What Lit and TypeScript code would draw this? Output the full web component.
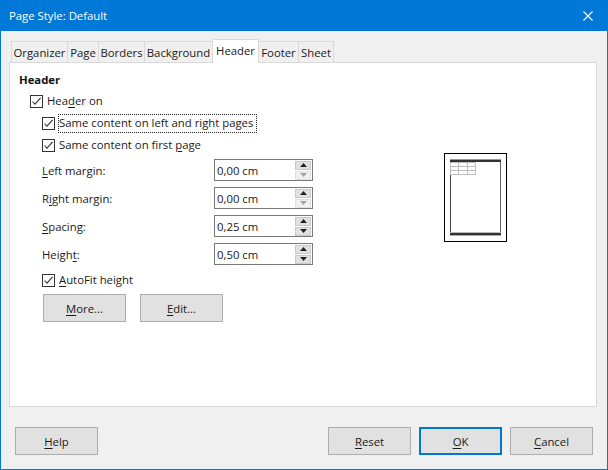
import { LitElement, html, css, svg } from "lit";
import { customElement } from "lit/decorators.js";

const check = html`<svg class="box" width="13" height="13" viewBox="0 0 13 13"><rect x=".5" y=".5" width="12" height="12" fill="#fff" stroke="#333"/><path d="M2.5 6.5 5 9.2 10.6 2.8" fill="none" stroke="#333" stroke-width="1.1"/></svg>`;

const arrow = (up: boolean, dis: boolean) => html`<div class="sb ${dis ? "dis" : ""}"><svg width="7" height="4" viewBox="0 0 7 4"><path d="${up ? "M0 4 3.5 0 7 4Z" : "M0 0 3.5 4 7 0Z"}" fill="${dis ? "#a3a3a3" : "#222"}"/></svg></div>`;

@customElement("app-root")
export class AppRoot extends LitElement {
  static styles = css`
    :host { display: block; width: 608px; height: 470px; font-family: "Open Sans", "Noto Sans", sans-serif; font-size: 11.33px; color: #1a1a1a; }
    * { box-sizing: border-box; }
    u { text-decoration: underline; text-underline-offset: 2px; text-decoration-thickness: 1px; }
    .win { width: 608px; height: 470px; background: #f0f0f0; border: 1px solid #0078d7; border-top: 0; display: flex; flex-direction: column; }
    .title { height: 31px; margin: 0 -1px; background: #0078d7; color: #fff; display: flex; align-items: center; justify-content: space-between; padding: 0 15px 0 9px; flex: none; }
    .title svg { display: block; }
    .body { flex: 1; padding: 8px 10px 0 8px; display: flex; flex-direction: column; }
    .tabs { display: flex; height: 23px; padding-left: 2px; align-items: flex-end; flex: none; position: relative; z-index: 1; }
    .tab { height: 21px; border: 1px solid #d9d9d9; border-bottom: 0; border-left: 0; background: #f0f0f0; display: flex; align-items: center; justify-content: center; }
    .tab:first-child { border-left: 1px solid #d9d9d9; }
    .tab.on { background: #fff; border-left: 0; margin-bottom: -1px; height: 24px; padding-bottom: 2px; }
    .panel { height: 345px; background: #fff; border: 1px solid #d9d9d9; padding: 8px 9px 0 9px; display: flex; flex: none; }
    .left { width: 305px; flex: none; display: flex; flex-direction: column; }
    h4 { margin: 0; font-size: 11.33px; font-weight: 700; height: 17px; line-height: 17px; color: #111; }
    .c { display: flex; align-items: center; gap: 4px; height: 14px; line-height: 14px; white-space: nowrap; }
    .c.l1 { margin: 6px 0 0 11px; }
    .c.l2 { margin: 8px 0 0 23px; }
    .c.auto { margin-top: 8px; }
    .focus { outline: 1px dotted #222; outline-offset: 0; padding: 1px 0 2px; width: 197px; height: 17px; display: block; line-height: 14px; }
    .field { display: flex; align-items: center; height: 22px; margin: 6px 0 0 23px; }
    .field.first { margin-top: 7px; }
    .field label { width: 172px; flex: none; }
    .spin { width: 99px; height: 22px; border: 1px solid #7a7a7a; background: #fff; display: flex; align-items: center; justify-content: space-between; padding: 0 1px 0 2px; }
    .sbs { width: 16px; display: flex; flex-direction: column; gap: 1px; }
    .sb { height: 9px; background: #e1e1e1; border: 1px solid #c9c9c9; display: flex; align-items: center; justify-content: center; }
    .sb.dis { background: #f0f0f0; border-color: #e0e0e0; }
    .sb svg { display: block; }
    .btns { display: flex; gap: 14px; margin: 7px 0 0 24px; }
    .btn { width: 83px; height: 28px; background: #e1e1e1; border: 1px solid #adadad; display: flex; align-items: center; justify-content: center; color: #1a1a1a; }
    .btn.def { border: 2px solid #0078d7; }
    .preview { margin: 82px 0 0 120px; width: 63px; height: 89px; flex: none; }
    .preview svg { display: block; }
    .foot { display: flex; justify-content: space-between; padding: 20px 4px 0 6px; }
    .foot .r { display: flex; gap: 8px; }
  `;

  render() {
    const tabs = [["Organizer", 57], ["Page", 31], ["Borders", 46], ["Background", 68], ["Header", 46], ["Footer", 40], ["Sheet", 35]] as const;
    const fields = [
      [html`<u>L</u>eft margin:`, "0,00 cm", true],
      [html`R<u>i</u>ght margin:`, "0,00 cm", true],
      [html`<u>S</u>pacing:`, "0,25 cm", false],
      [html`Heigh<u>t</u>:`, "0,50 cm", false],
    ] as const;
    return html`
      <div class="win">
        <div class="title">
          <span>Page Style: Default</span>
          <svg width="10" height="10" viewBox="0 0 10 10"><path d="M.5.5l9 9M9.5.5l-9 9" stroke="#fff" stroke-width="1.1" fill="none"/></svg>
        </div>
        <div class="body">
          <div class="tabs">
            ${tabs.map(([t, w]) => html`<div class="tab ${t === "Header" ? "on" : ""}" style="width:${w}px">${t}</div>`)}
          </div>
          <div class="panel">
            <div class="left">
              <h4>Header</h4>
              <div class="c l1">${check}<span>Hea<u>d</u>er on</span></div>
              <div class="c l2">${check}<span class="focus">Same content on left and right pages</span></div>
              <div class="c l2">${check}<span>Same content on first <u>p</u>age</span></div>
              ${fields.map(([l, v, dis], i) => html`
                <div class="field ${i === 0 ? "first" : ""}">
                  <label>${l}</label>
                  <div class="spin"><span>${v}</span><div class="sbs">${arrow(true, false)}${arrow(false, dis)}</div></div>
                </div>`)}
              <div class="c l2 auto">${check}<span><u>A</u>utoFit height</span></div>
              <div class="btns"><div class="btn"><span><u>M</u>ore...</span></div><div class="btn"><span><u>E</u>dit...</span></div></div>
            </div>
            <div class="preview">
              <svg width="63" height="89" viewBox="0 0 63 89" shape-rendering="crispEdges">
                <rect x=".5" y=".5" width="62" height="88" fill="#fff" stroke="#000"/>
                ${svg`
                <rect x="6" y="6" width="1" height="77" fill="#444"/>
                <rect x="56" y="6" width="1" height="77" fill="#666"/>
                <rect x="6" y="6" width="51" height="1" fill="#999"/>
                <rect x="6" y="7" width="51" height="2" fill="#333"/>
                <rect x="6" y="79" width="51" height="1" fill="#bbb"/>
                <rect x="6" y="80" width="51" height="2" fill="#333"/>
                <rect x="6" y="82" width="51" height="1" fill="#aaa"/>
                <rect x="6" y="9" width="26" height="13" fill="#fff"/>
                <path d="M6 9.5h26M6 13.5h26M6 17.5h26M6 21.5h26M6.5 9v13M14.5 9v13M23.5 9v13M31.5 9v13" stroke="#bdbdbd" fill="none"/>`}
              </svg>
            </div>
          </div>
          <div class="foot">
            <div class="btn"><span><u>H</u>elp</span></div>
            <div class="r">
              <div class="btn"><span><u>R</u>eset</span></div>
              <div class="btn def"><span><u>O</u>K</span></div>
              <div class="btn"><span><u>C</u>ancel</span></div>
            </div>
          </div>
        </div>
      </div>
    `;
  }
}
